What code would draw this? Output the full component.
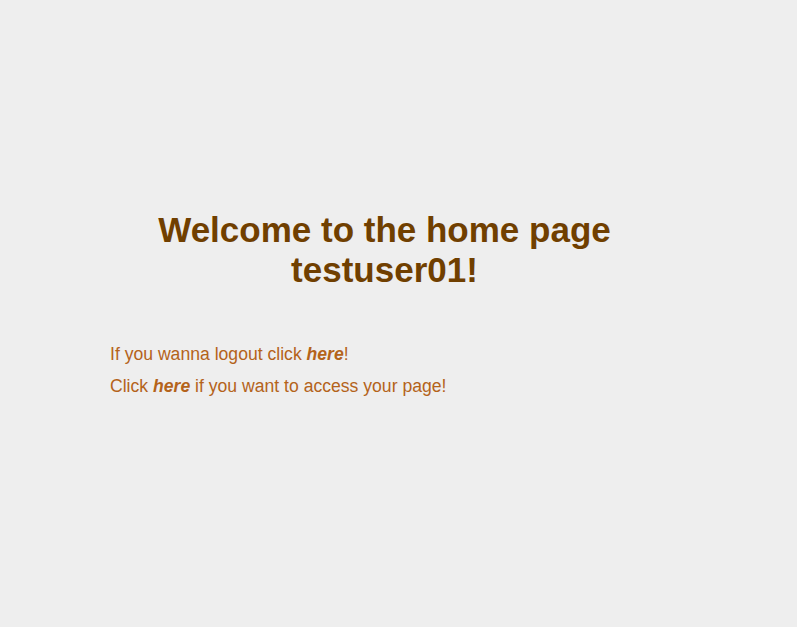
import React from "react";

const App = () => {
  return (
    <div
      className="min-h-[627px] w-full bg-[#eeeeee] pt-[210px]"
      style={{ fontFamily: '"Liberation Sans", Arial, sans-serif' }}
    >
      <div className="ml-[110px] w-[549px]">
        <h1 className="text-center text-[35px] font-bold leading-[40px] text-[#703f00]">
          Welcome to the home page testuser01!
        </h1>
        <div className="mt-[48px] text-[17.6px] leading-[32px] text-[#b4631a]">
          <p>
            If you wanna logout click{" "}
            <a href="#" className="font-bold italic">
              here
            </a>
            !
          </p>
          <p>
            Click{" "}
            <a href="#" className="font-bold italic">
              here
            </a>{" "}
            if you want to access your page!
          </p>
        </div>
      </div>
    </div>
  );
};

export default App;
